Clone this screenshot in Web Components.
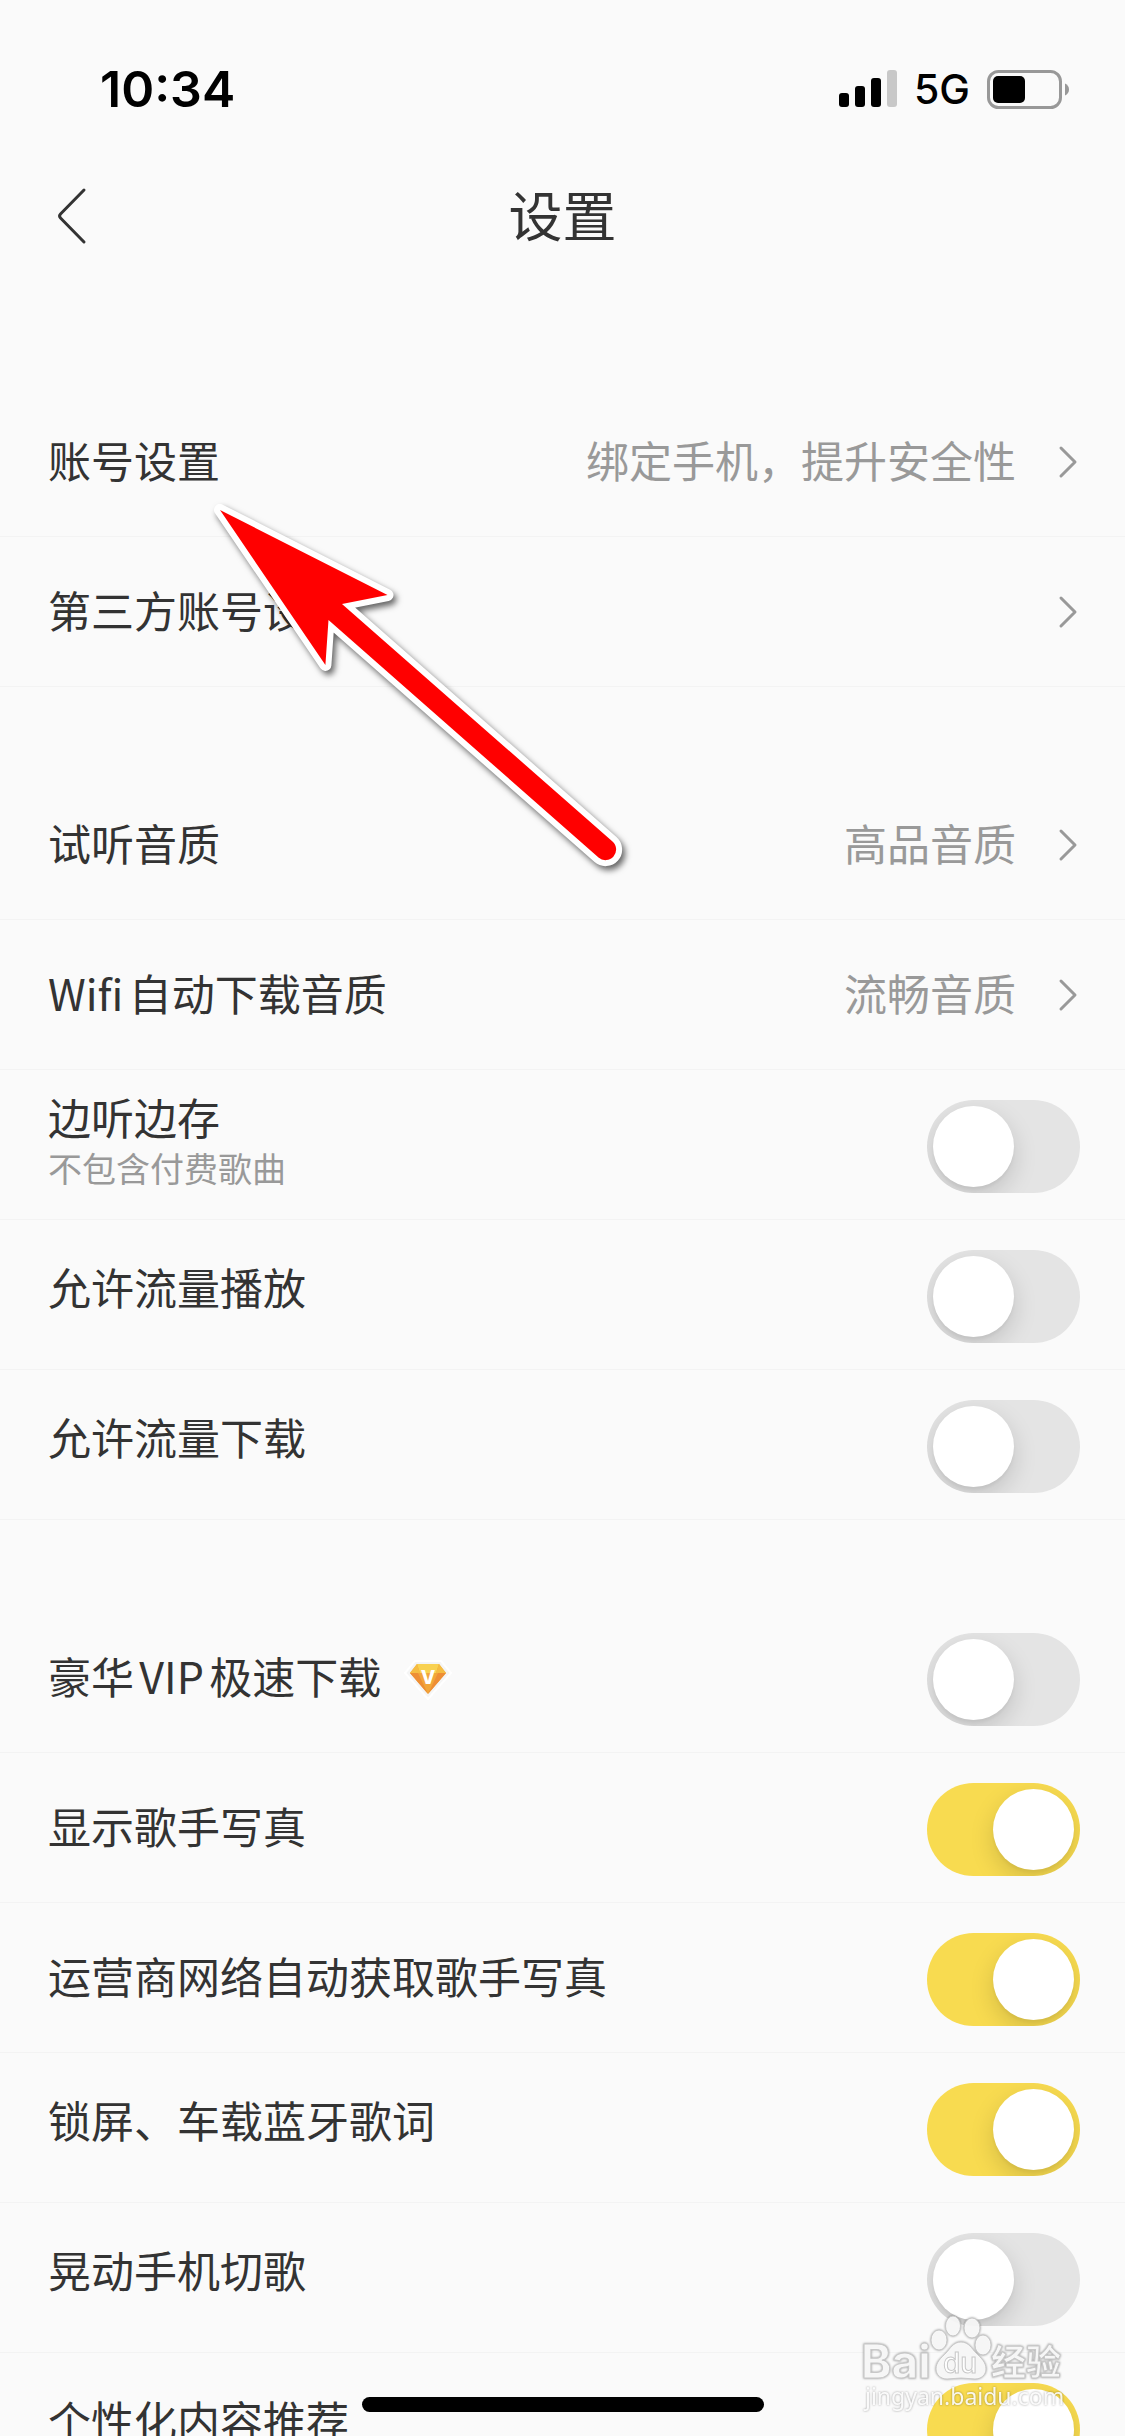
<!DOCTYPE html>
<html lang="zh-CN">
<head>
<meta charset="utf-8">
<meta name="viewport" content="width=device-width, initial-scale=1">
<title>设置</title>
<style>
  body {
    margin: 0;
    background: #fafafa;
    color: #333333;
    font-family: "Noto Sans CJK SC", sans-serif;
    text-autospace: normal;
  }
</style>
</head>
<body>

<settings-screen>
  <status-bar slot="top" time="10:34" network="5G"></status-bar>
  <nav-bar slot="top">设置</nav-bar>

  <settings-group>
    <link-row value="绑定手机，提升安全性">账号设置</link-row>
    <link-row>第三方账号设置</link-row>
  </settings-group>

  <settings-group>
    <link-row value="高品音质">试听音质</link-row>
    <link-row value="流畅音质">Wifi自动下载音质</link-row>
    <switch-row note="不包含付费歌曲">边听边存</switch-row>
    <switch-row raised>允许流量播放</switch-row>
    <switch-row raised>允许流量下载</switch-row>
  </settings-group>

  <settings-group>
    <switch-row>豪华VIP极速下载<vip-badge slot="badge"></vip-badge></switch-row>
    <switch-row on>显示歌手写真</switch-row>
    <switch-row on>运营商网络自动获取歌手写真</switch-row>
    <switch-row on raised>锁屏、车载蓝牙歌词</switch-row>
    <switch-row raised>晃动手机切歌</switch-row>
    <switch-row on raised>个性化内容推荐</switch-row>
  </settings-group>

  <pointer-arrow slot="overlay"></pointer-arrow>
  <home-indicator slot="overlay"></home-indicator>
  <water-mark slot="overlay"></water-mark>
</settings-screen>

<script>

// shared by link-row and switch-row
const rowStyles = `
    :host {
      display: block;
      border-bottom: 1px solid #f3f3f3; }

    .row {
      display: flex;
      align-items: center;
      justify-content: space-between;
      box-sizing: border-box;
      min-height: 149px;
      padding: 0 45px 0 48px;
      color: inherit;
      text-decoration: none;
      font-size: 43px;
      line-height: 52px; }

    .text {
      padding-bottom: 5px; }
`;


class SettingsScreen extends HTMLElement {

  constructor() {
    super();
    this.attachShadow({ mode: 'open' });

    this.shadowRoot.innerHTML = `
    <style>
    :host {
      display: flex;
      flex-direction: column;
      position: relative;
      height: 100vh;
      overflow: hidden; }

    main {
      display: flex;
      flex-direction: column;
      gap: 83px;
      padding-top: 87px; }
    </style>
    <slot name="top"></slot>
    <main><slot></slot></main>
    <slot name="overlay"></slot>
    `;
  }
}

customElements.define('settings-screen', SettingsScreen);


class StatusBar extends HTMLElement {

  constructor() {
    super();
    this.attachShadow({ mode: 'open' });

    this.shadowRoot.innerHTML = `
    <style>
    :host {
      display: flex;
      flex-shrink: 0;
      align-items: center;
      justify-content: space-between;
      box-sizing: border-box;
      height: 132px;
      padding: 46px 55px 0 100px;
      color: #000000;
      font-family: Inter, sans-serif; }

    .time {
      font-size: 50px;
      font-weight: 600; }

    .right {
      display: flex;
      align-items: center;
      gap: 17px;
      font-size: 41px;
      font-weight: 500; }

    svg {
      display: block; }
    </style>
    <span class="time">${this.getAttribute('time')}</span>
    <div class="right">
      <svg width="58" height="38" viewBox="0 0 58 38" aria-hidden="true">
        <rect x="0" y="23" width="10" height="14" rx="3"/>
        <rect x="16" y="16" width="10" height="21" rx="3"/>
        <rect x="32" y="8" width="10" height="29" rx="3"/>
        <rect x="48" y="0" width="10" height="37" rx="3" fill="#c8c8c8"/>
      </svg>
      <span>${this.getAttribute('network')}</span>
      <svg width="83" height="39" viewBox="0 0 83 39" aria-hidden="true">
        <rect x="1.5" y="1.5" width="72" height="36" rx="10" fill="none" stroke="#989898" stroke-width="3"/>
        <rect x="6" y="6" width="32" height="27" rx="5"/>
        <path d="M78 13.5c2.6 1 4 3.4 4 6s-1.4 5-4 6z" fill="#989898"/>
      </svg>
    </div>
    `;
  }
}

customElements.define('status-bar', StatusBar);


class NavBar extends HTMLElement {

  constructor() {
    super();
    this.attachShadow({ mode: 'open' });

    this.shadowRoot.innerHTML = `
    <style>
    :host {
      display: grid;
      flex-shrink: 0;
      grid-template-columns: 1fr auto 1fr;
      align-items: center;
      height: 168px;
      padding: 0 54px; }

    button {
      justify-self: start;
      padding: 0;
      border: 0;
      background: none;
      color: inherit; }

    svg {
      display: block; }

    h1 {
      margin: 0;
      padding-bottom: 5px;
      font-size: 54px;
      font-weight: 400;
      line-height: 64px; }
    </style>
    <button type="button" aria-label="返回">
      <svg width="36" height="58" viewBox="0 0 36 58" fill="none" stroke="currentColor" stroke-width="3" stroke-linecap="round">
        <path d="M30 3 6.500 27q-2 2 0 4L30 55"/>
      </svg>
    </button>
    <h1><slot></slot></h1>
    `;
  }
}

customElements.define('nav-bar', NavBar);


class SettingsGroup extends HTMLElement {

  constructor() {
    super();
    this.attachShadow({ mode: 'open' });

    this.shadowRoot.innerHTML = `
    <style>
    :host {
      display: block; }
    </style>
    <slot></slot>
    `;
  }
}

customElements.define('settings-group', SettingsGroup);


class LinkRow extends HTMLElement {

  constructor() {
    super();
    this.attachShadow({ mode: 'open' });

    this.shadowRoot.innerHTML = `
    <style>
    ${rowStyles}

    .end {
      display: flex;
      align-items: center;
      gap: 42px;
      color: #999999; }

    svg {
      display: block; }
    </style>
    <a class="row" href="#">
      <span class="text"><slot></slot></span>
      <span class="end">
        <span class="text">${this.getAttribute('value') || ''}</span>
        <svg width="22" height="34" viewBox="0 0 22 34" fill="none" stroke="currentColor" stroke-width="3" stroke-linecap="round" stroke-linejoin="round" aria-hidden="true">
          <path d="M3 3 17 17 3 31"/>
        </svg>
      </span>
    </a>
    `;
  }
}

customElements.define('link-row', LinkRow);


class SwitchRow extends HTMLElement {

  constructor() {
    super();
    this.attachShadow({ mode: 'open' });

    const note = this.getAttribute('note');

    this.shadowRoot.innerHTML = `
    <style>
    ${rowStyles}

    .text {
      display: flex;
      flex-direction: column; }

    /** the label sits a little above the switch **/
    :host([raised]) .text {
      padding-bottom: 18px; }

    .title {
      display: flex;
      align-items: center;
      gap: 22px; }

    small {
      color: #999999;
      font-size: 34px;
      line-height: 52px; }

    input {
      appearance: none;
      flex-shrink: 0;
      width: 153px;
      height: 93px;
      margin: 3px 0 0;
      padding: 6px;
      box-sizing: border-box;
      overflow: hidden;
      border-radius: 47px;
      background: #e4e4e4; }

    input::before {
      content: "";
      display: block;
      width: 81px;
      height: 81px;
      border-radius: 50%;
      background: #ffffff;
      box-shadow: 0 9px 24px rgba(0, 0, 0, 0.15), 0 3px 3px rgba(0, 0, 0, 0.04); }

    input:checked {
      background: #f8db50; }

    input:checked::before {
      margin-left: auto; }
    </style>
    <label class="row">
      <span class="text">
        <span class="title"><span><slot></slot></span><slot name="badge"></slot></span>
        ${note ? `<small>${note}</small>` : ''}
      </span>
      <input type="checkbox" ${this.hasAttribute('on') ? 'checked' : ''}>
    </label>
    `;
  }
}

customElements.define('switch-row', SwitchRow);


class VipBadge extends HTMLElement {

  constructor() {
    super();
    this.attachShadow({ mode: 'open' });

    this.shadowRoot.innerHTML = `
    <style>
    :host {
      display: block;
      padding-top: 10px; }

    svg {
      display: block; }

    text {
      font: 800 19px Inter, sans-serif; }
    </style>
    <svg width="50" height="42" viewBox="0 0 50 42">
      <path d="M12 2h26l10 12-23 26L2 14z" fill="#f5f5f5" stroke="#ffffff" stroke-width="2" stroke-linejoin="round"/>
      <path d="M14 5h22l7 9-18 21L7 14z" fill="#f2a63a"/>
      <path d="M14 5h22l-3 9H17z" fill="#f9d252"/>
      <path d="M14 5 7 14h10zM36 5l7 9H33z" fill="#f5bd42"/>
      <path d="M7 14h8l10 21zM43 14h-8L25 35z" fill="#ee8e35"/>
      <text x="25" y="25" text-anchor="middle" fill="#ffffff">V</text>
    </svg>
    `;
  }
}

customElements.define('vip-badge', VipBadge);


class PointerArrow extends HTMLElement {

  constructor() {
    super();
    this.attachShadow({ mode: 'open' });

    this.shadowRoot.innerHTML = `
    <style>
    :host {
      position: absolute;
      top: 500px;
      left: 210px;
      pointer-events: none; }

    svg {
      display: block;
      filter: drop-shadow(3px 4px 3px rgba(0, 0, 0, 0.6)); }
    </style>
    <svg width="430" height="390" viewBox="210 500 430 390" aria-hidden="true">
      <path d="M220 510 387.500 595 342 604 612.500 841.500a10.500 10.500 0 0 1-14 16L328.500 620 325.400 665z"
        fill="#ff0000" stroke="#ffffff" stroke-width="12" stroke-linejoin="round" paint-order="stroke"/>
    </svg>
    `;
  }
}

customElements.define('pointer-arrow', PointerArrow);


class HomeIndicator extends HTMLElement {

  constructor() {
    super();
    this.attachShadow({ mode: 'open' });

    this.shadowRoot.innerHTML = `
    <style>
    :host {
      position: absolute;
      bottom: 24px;
      left: 0;
      right: 0;
      display: flex;
      justify-content: center;
      pointer-events: none; }

    div {
      width: 402px;
      height: 15px;
      border-radius: 8px;
      background: #000000; }
    </style>
    <div></div>
    `;
  }
}

customElements.define('home-indicator', HomeIndicator);


class WaterMark extends HTMLElement {

  constructor() {
    super();
    this.attachShadow({ mode: 'open' });

    this.shadowRoot.innerHTML = `
    <style>
    :host {
      position: absolute;
      right: 55px;
      bottom: 16px;
      pointer-events: none; }

    svg {
      display: block;
      filter: drop-shadow(0 0 1px rgba(0, 0, 0, 0.4)); }

    .mark {
      fill: #ffffff;
      fill-opacity: 0.9;
      stroke: #c8c8c8;
      stroke-width: 1; }

    .latin {
      font: 700 46px Inter, sans-serif; }

    .du {
      font: 500 28px Inter, sans-serif; }

    .cjk {
      font: 700 35px "Noto Sans CJK SC", sans-serif; }

    .url {
      font: 400 23px "Noto Sans", sans-serif;
      fill: #ffffff;
      fill-opacity: 0.9; }
    </style>
    <svg width="210" height="110" viewBox="860 2310 210 110">
      <g class="mark">
        <text class="latin" x="861" y="2378">Bai</text>
        <ellipse cx="939" cy="2340" rx="8" ry="10"/>
        <ellipse cx="953" cy="2326" rx="7.500" ry="10"/>
        <ellipse cx="972" cy="2328" rx="8" ry="10"/>
        <ellipse cx="983" cy="2345" rx="8" ry="10"/>
        <path d="M961 2342c-8 0-11 7-15 11-5 5-10 9-10 16 0 6 5 10 11 10 5 0 9-1 14-1s9 1 14 1c6 0 11-4 11-10 0-7-5-11-10-16-4-4-7-11-15-11z"/>
        <text class="du" x="960" y="2373" text-anchor="middle">du</text>
        <text class="cjk" x="991" y="2375">经验</text>
      </g>
      <text class="url" x="865" y="2405">jingyan.baidu.com</text>
    </svg>
    `;
  }
}

customElements.define('water-mark', WaterMark);

</script>
</body>
</html>
